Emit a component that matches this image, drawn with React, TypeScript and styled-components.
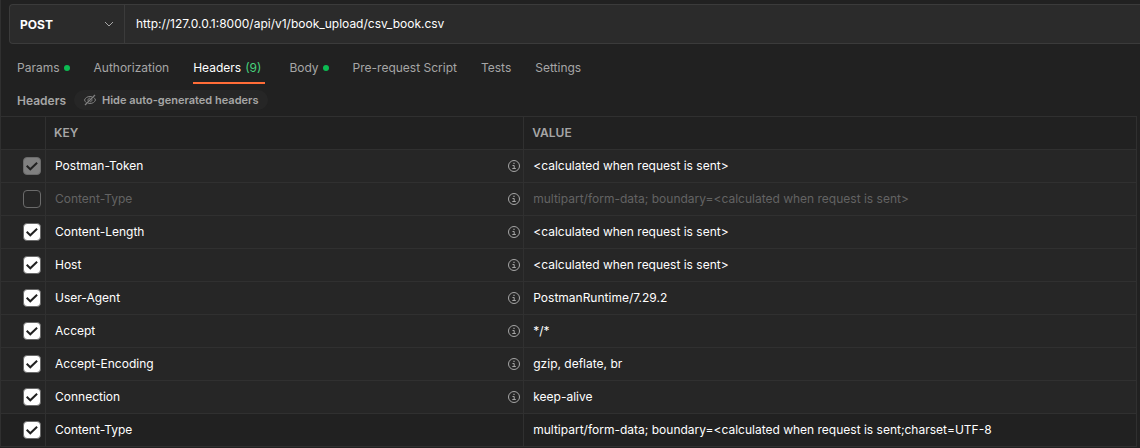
import React, { useState } from "react";
import styled, { createGlobalStyle, css } from "styled-components";

const color = {
  page: "#212121",
  row: "#262626",
  field: "#2b2b2b",
  fieldBorder: "#3b3b3b",
  line: "#303030",
  text: "#ffffff",
  muted: "#a6a6a6",
  faint: "#636363",
  green: "#0cbb52",
  count: "#47d17c",
  accent: "#ff6c37",
};

const GlobalStyle = createGlobalStyle`
  *, *::before, *::after { box-sizing: border-box; }
  body {
    margin: 0;
    background: ${color.page};
    color: ${color.text};
    font-family: Inter, "Liberation Sans", sans-serif;
    font-size: 12px;
    line-height: 16px;
  }
  button, input, select { font: inherit; color: inherit; }
`;

const Page = styled.main`
  border-left: 1px solid ${color.line};
  padding-top: 4px;
  overflow-x: hidden;
`;

const RequestBar = styled.form`
  display: flex;
  height: 40px;
  margin-left: 8px;
  border: 1px solid ${color.fieldBorder};
  border-right: 0;
  border-radius: 4px 0 0 4px;
  background: ${color.field};
`;

const MethodField = styled.div`
  display: grid;
  align-items: center;
  width: 115px;
  border-right: 1px solid ${color.fieldBorder};

  > * { grid-area: 1 / 1; }
  > svg { justify-self: end; margin-right: 10px; pointer-events: none; }
`;

const MethodSelect = styled.select`
  appearance: none;
  width: 100%;
  height: 100%;
  padding: 2px 28px 0 10px;
  border: 0;
  background: transparent;
  font-weight: 700;
  outline: none;
`;

const UrlInput = styled.input`
  flex: 1;
  min-width: 0;
  padding: 0 11px;
  border: 0;
  background: transparent;
  outline: none;
`;

const Tabs = styled.nav`
  display: flex;
  gap: 24px;
  height: 40px;
  padding: 0 16px;
`;

const Tab = styled.button<{ $active?: boolean }>`
  display: flex;
  align-items: center;
  gap: 4px;
  padding: 10px 0 0;
  border: 0;
  border-bottom: 2px solid ${(p) => (p.$active ? color.accent : "transparent")};
  background: transparent;
  color: ${(p) => (p.$active ? color.text : color.muted)};
  white-space: nowrap;
`;

const Count = styled.span`
  padding-right: 4px;
  color: ${color.count};
`;

const Dot = styled.span`
  width: 6px;
  height: 6px;
  border-radius: 50%;
  background: ${color.green};
`;

const SectionBar = styled.div`
  display: flex;
  align-items: center;
  gap: 8px;
  height: 32px;
  padding: 0 16px;
`;

const SectionTitle = styled.h2`
  margin: 0;
  padding-top: 2px;
  color: ${color.muted};
  font-size: 12px;
  font-weight: 600;
`;

const Pill = styled.button`
  display: flex;
  align-items: center;
  gap: 6px;
  height: 20px;
  padding: 0 10px;
  border: 0;
  border-radius: 10px;
  background: #262626;
  color: ${color.muted};
  font-size: 11px;
  font-weight: 600;
`;

const Table = styled.table`
  width: calc(100% - 3px);
  border-spacing: 0;
  border-top: 1px solid ${color.line};
  table-layout: fixed;
`;

const CheckColumn = styled.col`
  width: 45px;
`;

const KeyColumn = styled.col`
  width: 42.1%;
`;

const cell = css`
  height: 33px;
  padding: 0 0 0 8px;
  border-right: 1px solid ${color.line};
  border-bottom: 1px solid ${color.line};
  text-align: left;
`;

const HeadCell = styled.th`
  ${cell}
  color: ${color.muted};
  font-weight: 600;
`;

const Row = styled.tr<{ $auto: boolean; $off: boolean }>`
  background: ${(p) => (p.$auto ? color.row : color.page)};
  color: ${(p) => (p.$off ? color.faint : color.text)};
`;

const Cell = styled.td`
  ${cell}
  padding-left: 9px;
`;

const CheckCell = styled.td`
  ${cell}
  padding-left: 22px;
`;

const KeyContent = styled.div`
  display: flex;
  align-items: center;
  justify-content: space-between;
  padding-right: 3px;
`;

const CheckBox = styled.span`
  display: grid;
  width: 18px;
  height: 18px;

  > * { grid-area: 1 / 1; }
  > svg { pointer-events: none; }
`;

const CheckInput = styled.input`
  appearance: none;
  width: 18px;
  height: 18px;
  margin: 0;
  border: 1px solid #6b6b6b;
  border-radius: 4px;

  &:checked { background: #ffffff; }
  &:checked:disabled { background: #808080; }
  &:not(:checked) + svg { visibility: hidden; }
`;

const Chevron = () => (
  <svg width="10" height="6" viewBox="0 0 10 6" fill="none" stroke={color.muted}>
    <path d="M1 1l4 4 4-4" />
  </svg>
);

const CheckMark = () => (
  <svg width="18" height="18" viewBox="0 0 18 18" fill="none" stroke="#212121" strokeWidth="2">
    <path d="M3.700 8.800l3.600 3.500 6.800-6.600" />
  </svg>
);

const InfoIcon = () => (
  <svg width="12" height="12" viewBox="0 0 12 12" fill="none" stroke={color.muted}>
    <circle cx="6" cy="6" r="5.5" />
    <path d="M4.5 5.5h1.7v3M4.3 8.5h3.5" />
    <path d="M5.4 3.3h1.2" strokeWidth="1.2" />
  </svg>
);

const HiddenEyeIcon = () => (
  <svg width="12" height="12" viewBox="0 0 12 12" fill="none" stroke="#808080">
    <path d="M1 11L11 1" strokeWidth="1.2" />
    <path d="M2.4 8.7C1.3 7.9.7 6.7.5 6 1.200 3.900 3.300 2.500 6 2.500c.8 0 1.500.1 2.100.4M9.700 3.500c1 .7 1.600 1.700 1.800 2.500-.7 2.100-2.800 3.500-5.500 3.500-.7 0-1.300-.1-1.900-.3" />
    <path d="M4 6.800C3.600 5.500 4.600 4 6.200 4.100M8 5.300C8.300 6.600 7.300 7.900 5.900 7.900" />
  </svg>
);

type Header = { key: string; value: string; checked: boolean; auto: boolean; locked?: boolean };

const calculated = "<calculated when request is sent>";

const initialHeaders: Header[] = [
  { key: "Postman-Token", value: calculated, checked: true, auto: true, locked: true },
  { key: "Content-Type", value: `multipart/form-data; boundary=${calculated}`, checked: false, auto: true },
  { key: "Content-Length", value: calculated, checked: true, auto: true },
  { key: "Host", value: calculated, checked: true, auto: true },
  { key: "User-Agent", value: "PostmanRuntime/7.29.2", checked: true, auto: true },
  { key: "Accept", value: "*/*", checked: true, auto: true },
  { key: "Accept-Encoding", value: "gzip, deflate, br", checked: true, auto: true },
  { key: "Connection", value: "keep-alive", checked: true, auto: true },
  {
    key: "Content-Type",
    value: "multipart/form-data; boundary=<calculated when request is sent;charset=UTF-8",
    checked: true,
    auto: false,
  },
];

const tabs: { name: string; dot?: boolean; count?: number }[] = [
  { name: "Params", dot: true },
  { name: "Authorization" },
  { name: "Headers", count: 9 },
  { name: "Body", dot: true },
  { name: "Pre-request Script" },
  { name: "Tests" },
  { name: "Settings" },
];

export default function App() {
  const [headers, setHeaders] = useState(initialHeaders);
  const [active, setActive] = useState("Headers");
  const [url, setUrl] = useState("http://127.0.0.1:8000/api/v1/book_upload/csv_book.csv");

  const toggle = (index: number) =>
    setHeaders((list) => list.map((h, i) => (i === index ? { ...h, checked: !h.checked } : h)));

  return (
    <>
      <GlobalStyle />
      <Page>
        <RequestBar>
          <MethodField>
            <MethodSelect aria-label="Method" defaultValue="POST">
              <option>POST</option>
            </MethodSelect>
            <Chevron />
          </MethodField>
          <UrlInput aria-label="Request URL" value={url} onChange={(e) => setUrl(e.target.value)} />
        </RequestBar>
        <Tabs>
          {tabs.map((tab) => (
            <Tab key={tab.name} type="button" $active={tab.name === active} onClick={() => setActive(tab.name)}>
              {tab.name}
              {tab.count && <Count>({tab.count})</Count>}
              {tab.dot && <Dot />}
            </Tab>
          ))}
        </Tabs>
        <SectionBar>
          <SectionTitle>Headers</SectionTitle>
          <Pill type="button">
            <HiddenEyeIcon />
            Hide auto-generated headers
          </Pill>
        </SectionBar>
        <Table>
          <colgroup>
            <CheckColumn />
            <KeyColumn />
            <col />
          </colgroup>
          <thead>
            <tr>
              <HeadCell aria-label="Enabled" />
              <HeadCell>KEY</HeadCell>
              <HeadCell>VALUE</HeadCell>
            </tr>
          </thead>
          <tbody>
            {headers.map((h, i) => (
              <Row key={i} $auto={h.auto} $off={!h.checked}>
                <CheckCell>
                  <CheckBox>
                    <CheckInput
                      type="checkbox"
                      aria-label={h.key}
                      checked={h.checked}
                      disabled={h.locked}
                      onChange={() => toggle(i)}
                    />
                    <CheckMark />
                  </CheckBox>
                </CheckCell>
                <Cell>
                  <KeyContent>
                    {h.key}
                    {h.auto && <InfoIcon />}
                  </KeyContent>
                </Cell>
                <Cell>{h.value}</Cell>
              </Row>
            ))}
          </tbody>
        </Table>
      </Page>
    </>
  );
}
